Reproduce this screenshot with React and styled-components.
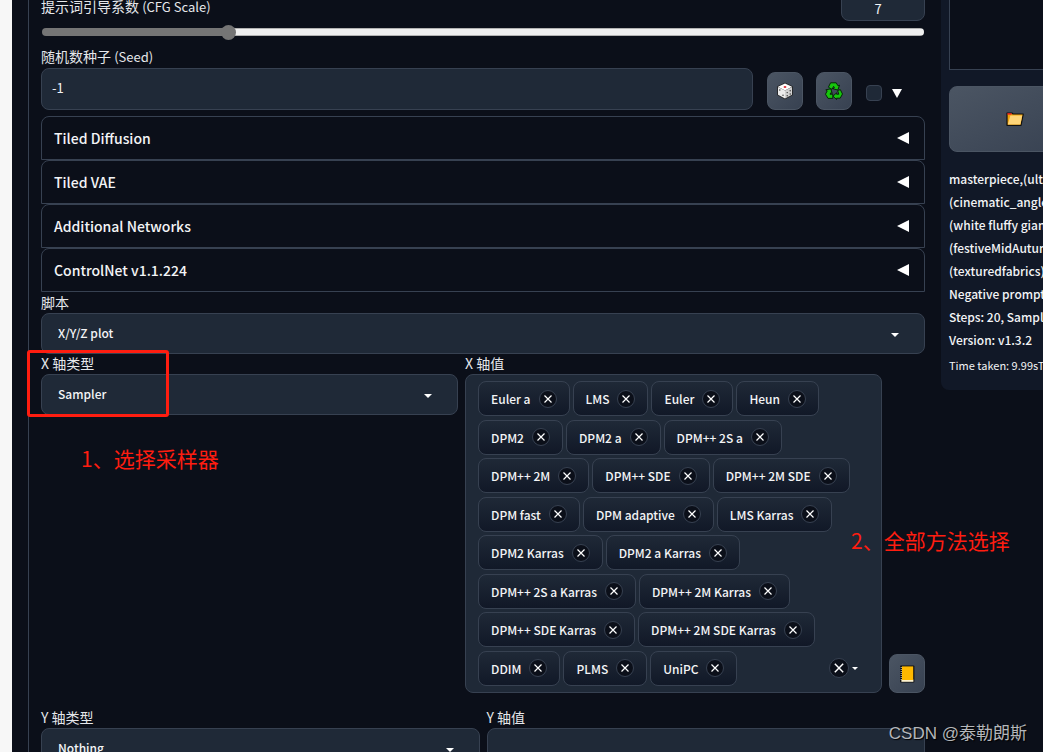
import React, { useState } from "react"
import styled, { createGlobalStyle } from "styled-components"

const accordions = ["Tiled Diffusion", "Tiled VAE", "Additional Networks", "ControlNet v1.1.224"]

const allSamplers = [
  "Euler a", "LMS", "Euler", "Heun", "DPM2", "DPM2 a", "DPM++ 2S a",
  "DPM++ 2M", "DPM++ SDE", "DPM++ 2M SDE", "DPM fast", "DPM adaptive",
  "LMS Karras", "DPM2 Karras", "DPM2 a Karras", "DPM++ 2S a Karras",
  "DPM++ 2M Karras", "DPM++ SDE Karras", "DPM++ 2M SDE Karras",
  "DDIM", "PLMS", "UniPC"
]

const infoLines = [
  "masterpiece,(ultra",
  "(cinematic_angle",
  "(white fluffy giant",
  "(festiveMidAutumn",
  "(texturedfabrics)",
  "Negative prompt:",
  "Steps: 20, Sampler",
  "Version: v1.3.2"
]

const Cross = ({ size }) => (
  <svg width={size} height={size} viewBox="0 0 10 10" aria-hidden="true">
    <path d="M1.5 1.5 L8.5 8.5 M8.5 1.5 L1.5 8.5" stroke="#fff" strokeWidth="1.2" />
  </svg>
)

const Dice = () => (
  <svg width="18" height="18" viewBox="0 0 18 18" aria-hidden="true">
    <path d="M9 1 L16.5 4.6 V13 L9 17 L1.5 13 V4.6Z" fill="#222" stroke="#222" strokeWidth=".6" strokeLinejoin="round" />
    <path d="M9 1.4 L16 4.8 L9 8.4 L2 4.8Z" fill="#fff" />
    <path d="M2 5 L9 8.6 V16.5 L2 12.8Z" fill="#ececec" />
    <path d="M16 5 L9 8.6 V16.5 L16 12.8Z" fill="#d2d2d2" />
    <ellipse cx="9" cy="5" rx="1.4" ry="1" fill="#e0303a" />
    <g fill="#333">
      <circle cx="3.8" cy="8" r=".7" />
      <circle cx="7" cy="13.3" r=".7" />
      <circle cx="11.2" cy="10.6" r=".7" />
      <circle cx="14.2" cy="8.8" r=".7" />
      <circle cx="11.2" cy="13.8" r=".7" />
      <circle cx="14.2" cy="12" r=".7" />
    </g>
  </svg>
)

const Recycle = () => (
  <svg width="18" height="18" viewBox="0 0 18 18" aria-hidden="true">
    <g fill="#16c60c" stroke="#07240a" strokeWidth="1" strokeLinejoin="round">
      <path d="M5.6 .8 H11.2 L13 3.8 L14.6 3.2 L12.8 8 L8 6.8 L9.4 5.8 L8.6 4.4 L7 7.4 L3.4 5.2Z" />
      <path d="M12.6 8.6 L15.3 7.6 L17.5 12 L15.2 16.2 H11.6 V17.6 L8 14.2 L11.6 10.8 V12.2 H13.8Z" />
      <path d="M.8 7.8 L5.8 6.8 L7.2 11.4 L5.8 10.8 L5 12.2 H7.8 V16.4 H3 L.5 12.2 L2.2 8.8Z" />
    </g>
  </svg>
)

const Folder = () => (
  <svg width="18" height="14" viewBox="0 0 18 14" aria-hidden="true">
    <path d="M1 1 H6 L7 2 H17.3 L15 13.3 H1Z" fill="#f0a30a" stroke="#111" strokeWidth="1.2" strokeLinejoin="round" />
    <path d="M1.4 1.2 H5.6 V2.6 H1.4Z" fill="#e81224" />
    <path d="M4.4 3.4 H16.2 L14.4 12.6 H1.8Z" fill="#ffd679" />
  </svg>
)

const Book = () => (
  <svg width="16" height="18" viewBox="0 0 16 18" aria-hidden="true">
    <rect x="1" y=".4" width="14.4" height="17.2" rx="1" fill="#111" />
    <rect x="2.4" y="14.6" width="12" height="2.2" fill="#fff3cf" />
    <rect x="3" y="1.4" width="11.2" height="13.6" fill="#ffb900" />
    <path d="M2.2 2 V15" stroke="#d9d9d9" strokeDasharray="1 1" />
  </svg>
)

const Dropdown = ({ id, label, value }) => (
  <Field>
    <Label htmlFor={id}>{label}</Label>
    <SelectWrap>
      <Select id={id} defaultValue={value}>
        <option>{value}</option>
      </Select>
      <Caret />
    </SelectWrap>
  </Field>
)

const App = () => {
  const [cfg, setCfg] = useState(7)
  const [samplers, setSamplers] = useState(allSamplers)

  const remove = name => setSamplers(samplers.filter(s => s !== name))

  return (
    <Page>
      <GlobalStyle />
      <Edge />
      <Settings>
        <SliderHead>
          <Label htmlFor="cfg">提示词引导系数 <Latin>(CFG Scale)</Latin></Label>
          <NumberBox
            aria-label="CFG Scale"
            value={cfg}
            onChange={e => setCfg(e.target.value)}
          />
        </SliderHead>
        <Slider
          id="cfg"
          type="range"
          min="1"
          max="30"
          step="0.5"
          value={cfg}
          style={{ "--fill": `${((cfg - 1) / 29) * 100}%` }}
          onChange={e => setCfg(e.target.value)}
        />

        <SeedRow>
          <Field>
            <Label htmlFor="seed">随机数种子 <Latin>(Seed)</Latin></Label>
            <TextBox id="seed" defaultValue="-1" />
          </Field>
          <SeedTools>
            <ToolButton aria-label="Random seed"><Dice /></ToolButton>
            <ToolButton aria-label="Reuse seed"><Recycle /></ToolButton>
            <Extra>
              <Check type="checkbox" aria-label="Extra seed options" />
              <DownArrow />
            </Extra>
          </SeedTools>
        </SeedRow>

        <Accordions>
          {accordions.map(name => (
            <Accordion key={name} aria-expanded="false">
              {name}
              <LeftArrow />
            </Accordion>
          ))}
        </Accordions>

        <Dropdown id="script" label="脚本" value="X/Y/Z plot" />

        <AxisRow>
          <Dropdown id="x-type" label="X 轴类型" value="Sampler" />
          <Field>
            <Label as="span" id="x-values">X 轴值</Label>
            <Values role="group" aria-labelledby="x-values">
              {samplers.map(name => (
                <Chip key={name}>
                  {name}
                  <Remove aria-label={"Remove " + name} onClick={() => remove(name)}>
                    <Cross size={10} />
                  </Remove>
                </Chip>
              ))}
              <ValuesEnd>
                <Remove $large aria-label="Remove all" onClick={() => setSamplers([])}>
                  <Cross size={12} />
                </Remove>
                <Caret $small />
              </ValuesEnd>
            </Values>
          </Field>
          <ToolButton $tall aria-label="Fill values"><Book /></ToolButton>
        </AxisRow>

        <AxisRow $spaced>
          <Dropdown id="y-type" label="Y 轴类型" value="Nothing" />
          <Field>
            <Label htmlFor="y-values">Y 轴值</Label>
            <TextBox id="y-values" />
          </Field>
        </AxisRow>
      </Settings>

      <Results>
        <Gallery />
        <FolderButton aria-label="Open folder"><Folder /></FolderButton>
        <Info>
          {infoLines.map(line => <p key={line}>{line}</p>)}
        </Info>
        <Timing>Time taken: 9.99sTorch</Timing>
      </Results>

      <Highlight />
      <Note $x={81} $y={442}>1、选择采样器</Note>
      <Note $x={851} $y={524}>2、全部方法选择</Note>
      <Watermark>CSDN @泰勒朗斯</Watermark>
    </Page>
  )
}

const GlobalStyle = createGlobalStyle`
  * {
    box-sizing: border-box;
  }
  body {
    margin: 0;
    background: #0b0f19;
  }
  body, button, input, select {
    font-family: "Noto Sans CJK SC", "Noto Sans", sans-serif;
    font-size: 13px;
    color: #f3f4f6;
  }
  p {
    margin: 0;
  }
`

const Page = styled.div`
  position: relative;
  display: grid;
  grid-template-columns: 12px minmax(0, 1fr) 102px;
  height: 100vh;
  overflow: hidden;
`

const Edge = styled.div`
  background: #f7f7f7;
`

const Settings = styled.main`
  margin: 0 16px;
  padding-left: 12px;
  border-left: 1px solid #374151;
`

const Field = styled.div`
  display: flex;
  flex-direction: column;
  flex: 1;
  min-width: 0;
`

const Label = styled.label`
  padding-bottom: 2px;
  font-size: 14px;
  line-height: 18px;
  color: #e5e7eb;
`

const Latin = styled.span`
  font-size: 13px;
`

const SliderHead = styled.div`
  display: flex;
  justify-content: space-between;
  align-items: flex-end;
  height: 21px;

  label {
    align-self: center;
    margin-bottom: 6px;
  }
`

const NumberBox = styled.input`
  width: 84px;
  height: 32px;
  padding: 6px 16px 0 6px;
  border: 1px solid #374151;
  border-radius: 8px;
  background: #1f2937;
  text-align: center;
`

const Slider = styled.input`
  display: block;
  appearance: none;
  width: calc(100% - 2px);
  height: 8px;
  margin: 7px 1px 12px;
  border-radius: 4px;
  background:
    linear-gradient(to right, #757575 var(--fill), transparent var(--fill)),
    linear-gradient(to bottom, #b2b2b2 1px, #efefef 1px, #efefef 7px, #b2b2b2 7px);

  &::-webkit-slider-thumb {
    appearance: none;
    width: 15px;
    height: 15px;
    border-radius: 50%;
    background: #757575;
  }
`

const SeedRow = styled.div`
  display: flex;
  align-items: flex-end;
  gap: 14px;
  margin-top: -1px;
`

const TextBox = styled.input`
  width: 100%;
  height: 42px;
  padding: 0 10px 4px;
  border: 1px solid #374151;
  border-radius: 8px;
  background: #1f2937;
`

const SeedTools = styled.div`
  display: flex;
  gap: 13px;
  width: 158px;
`

const ToolButton = styled.button`
  display: flex;
  align-items: center;
  justify-content: center;
  width: 36px;
  height: ${p => (p.$tall ? "39px" : "38px")};
  padding: 0;
  border: 1px solid #4b5563;
  border-radius: 8px;
  background: linear-gradient(to bottom right, #4b5563, #374151);
`

const Extra = styled.label`
  display: flex;
  align-items: center;
  gap: 10px;
  padding: 4px 0 0 1px;
`

const Check = styled.input`
  appearance: none;
  width: 16px;
  height: 16px;
  margin: 0;
  border: 1px solid #374151;
  border-radius: 4px;
  background: #1f2937;
`

const DownArrow = styled.span`
  border: 5px solid transparent;
  border-top: 9px solid #fff;
  border-bottom: 0;
`

const LeftArrow = styled.span`
  border: 6px solid transparent;
  border-right: 12px solid #fff;
  border-left: 0;
`

const Accordions = styled.div`
  margin: 6px 0 1px;
`

const Accordion = styled.button`
  display: flex;
  align-items: center;
  justify-content: space-between;
  width: 100%;
  height: 44px;
  padding: 0 15px 0 12px;
  border: 1px solid #374151;
  border-radius: 8px 8px 0 0;
  background: none;
  font-size: 14px;
  font-weight: 500;
`

const SelectWrap = styled.div`
  position: relative;
  display: flex;
`

const Select = styled.select`
  appearance: none;
  width: 100%;
  height: 41px;
  padding: 0 16px 2px;
  border: 1px solid #374151;
  border-radius: 8px;
  background: #1f2937;
  font-size: 12px;
  font-weight: 500;
`

const Caret = styled.span`
  border: ${p => (p.$small ? "3px" : "4px")} solid transparent;
  border-top-color: #fff;
  border-bottom: 0;

  ${SelectWrap} & {
    position: absolute;
    top: 20px;
    right: 26px;
    pointer-events: none;
  }
`

const AxisRow = styled.div`
  display: flex;
  align-items: flex-start;
  gap: 7px;
  margin-top: ${p => (p.$spaced ? "15px" : "0")};

  > button {
    align-self: flex-end;
  }
`

const Values = styled.div`
  display: flex;
  flex-wrap: wrap;
  align-content: space-between;
  gap: 2px 3px;
  min-height: 319px;
  padding: 6px 12px;
  border: 1px solid #374151;
  border-radius: 8px;
  background: #1f2937;
`

const Chip = styled.span`
  display: flex;
  align-items: center;
  gap: 8px;
  height: 35px;
  padding: 0 12px;
  border: 1px solid #374151;
  border-radius: 8px;
  background: linear-gradient(to bottom, #1f2937, #111827);
  font-size: 12px;
  font-weight: 500;
  white-space: nowrap;
`

const Remove = styled.button`
  display: flex;
  align-items: center;
  justify-content: center;
  width: ${p => (p.$large ? "20px" : "18px")};
  height: ${p => (p.$large ? "20px" : "18px")};
  padding: 0;
  border: 1px solid #374151;
  border-radius: 50%;
  background: #0b0f19;
`

const ValuesEnd = styled.div`
  display: flex;
  flex: 1;
  align-items: center;
  justify-content: flex-end;
  gap: 3px;
  padding-right: 11px;
`

const Results = styled.aside`
  justify-self: start;
  align-self: start;
  width: 400px;
  height: 390px;
  padding: 0 8px;
  border-radius: 0 0 8px 8px;
  background: #111827;
`

const Gallery = styled.div`
  height: 70px;
  border: 1px solid #374151;
  border-top: 0;
  background: #0b0f19;
`

const FolderButton = styled.button`
  display: flex;
  align-items: center;
  justify-content: center;
  width: 132px;
  height: 66px;
  margin: 16px 0 15px;
  border: 1px solid #4b5563;
  border-radius: 8px;
  background: linear-gradient(to bottom right, #4b5563, #374151);
`

const Info = styled.div`
  font-size: 12px;
  font-weight: 500;
  line-height: 23px;
  white-space: nowrap;
`

const Timing = styled.p`
  margin-top: 6px;
  font-size: 11px;
  line-height: 17px;
  white-space: nowrap;
`

const Highlight = styled.div`
  position: absolute;
  top: 350px;
  left: 27px;
  width: 142px;
  height: 67px;
  border: 3px solid #ff1d10;
  border-radius: 3px;
  pointer-events: none;
`

const Note = styled.p`
  position: absolute;
  top: ${p => p.$y}px;
  left: ${p => p.$x}px;
  font-size: 21px;
  font-weight: 400;
  line-height: 32px;
  white-space: nowrap;
  color: #ff1d10;
`

const Watermark = styled.p`
  position: absolute;
  right: 16px;
  bottom: 5px;
  font-family: "Liberation Sans", "Noto Sans CJK SC", sans-serif;
  font-size: 17px;
  line-height: 26px;
  color: #b4b6ba;
  text-shadow: 1px 1px 1px #000;
`

export default App
